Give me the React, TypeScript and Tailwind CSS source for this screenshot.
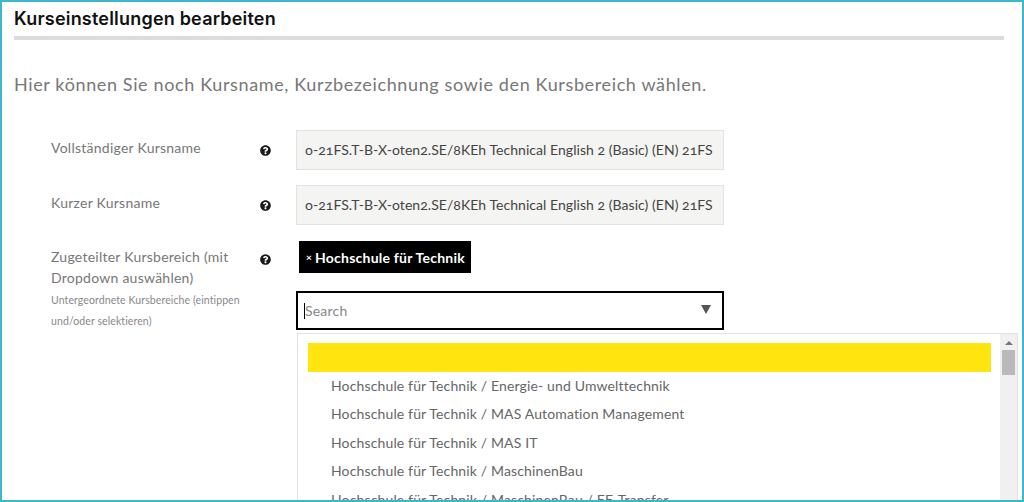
import { FaQuestionCircle } from 'react-icons/fa';

const items = [
  'Hochschule für Technik / Energie- und Umwelttechnik',
  'Hochschule für Technik / MAS Automation Management',
  'Hochschule für Technik / MAS IT',
  'Hochschule für Technik / MaschinenBau',
  'Hochschule für Technik / MaschinenBau / EE-Transfer',
];

const courseName = 'o-21FS.T-B-X-oten2.SE/8KEh Technical English 2 (Basic) (EN) 21FS';

function Help() {
  return <FaQuestionCircle className="w-[11px] h-[11px] text-[#1a1a1a]" />;
}

function ReadonlyField({ value }: { value: string }) {
  return (
    <input
      readOnly
      value={value}
      className="block w-[428px] h-[40px] pl-[8px] pr-0 pb-[2px] bg-[#f4f4f2] border border-[#e2e2e0] text-[14px] text-[#444] oldstyle-nums tracking-[0.05px] outline-none"
    />
  );
}

export default function App() {
  return (
    <div className="h-[502px] overflow-hidden bg-white border-2 border-[#3db7cb] font-['Lato',sans-serif]">
      <div className="pl-[12px] pr-[18px] pt-[6px]">
        <h2 className="h-[28px] font-['Inter',sans-serif] text-[18px] leading-[22px] font-semibold text-[#111] tracking-[0.2px]">
          Kurseinstellungen bearbeiten
        </h2>
        <div className="h-[4px] bg-[#dcdcdc]" />
        <p className="mt-[32px] text-[18px] leading-[24px] text-[#777] tracking-[0.63px]">
          Hier können Sie noch Kursname, Kurzbezeichnung sowie den Kursbereich wählen.
        </p>
      </div>

      <div className="mt-[34px] pl-[49px] flex flex-col">
        <div className="flex items-center h-[40px]">
          <div className="w-[193px] h-[40px] pt-[8px] text-[14px] leading-[20px] text-[#777] tracking-[0.25px]">Vollständiger Kursname</div>
          <div className="w-[52px] pl-[16px]"><Help /></div>
          <ReadonlyField value={courseName} />
        </div>

        <div className="flex items-center h-[40px] mt-[15px]">
          <div className="w-[193px] h-[40px] pt-[8px] text-[14px] leading-[20px] text-[#777] tracking-[0.25px]">Kurzer Kursname</div>
          <div className="w-[52px] pl-[16px]"><Help /></div>
          <ReadonlyField value={courseName} />
        </div>

        <div className="flex mt-[16px]">
          <div className="w-[193px] pt-[5px]">
            <div className="text-[14px] leading-[21px] text-[#777] tracking-[0.25px]">
              Zugeteilter Kursbereich (mit Dropdown auswählen)
            </div>
            <div className="mt-[2px] text-[10.5px] leading-[21px] text-[#888] tracking-[0.1px]">
              Untergeordnete Kursbereiche (eintippen und/oder selektieren)
            </div>
          </div>
          <div className="w-[52px] pl-[16px] pt-[13px]"><Help /></div>

          <div className="flex-1 min-w-0">
            <div className="ml-[3px] w-[172px] h-[32px] bg-black text-white flex items-center pl-[7px] text-[14px] font-bold tracking-[0.23px]">
              <span className="w-[9px] text-[10px] leading-none">×</span>
              <span>Hochschule für Technik</span>
            </div>

            <div className="mt-[18px] w-[428px] h-[39px] border-2 border-black flex items-center pl-[6px] pr-[11px]">
              <span className="w-px h-[16px] bg-black" />
              <span className="text-[14px] text-[#888] tracking-[0.2px]">Search</span>
              <span className="ml-auto mb-[3px] w-0 h-0 border-x-[5.5px] border-x-transparent border-t-[9px] border-t-[#555]" />
            </div>

            <div className="mt-[3px] ml-[1px] mr-[4px] h-[170px] border border-[#e2e2e2] flex overflow-hidden">
              <div className="flex-1 min-w-0 pl-[10px] pr-[9px] pt-[9px]">
                <div className="h-[29px] bg-[#ffe40f]" />
                <ul className="-mt-[0.6px]">
                  {items.map((t) => (
                    <li key={t} className="h-[28.4px] pl-[23px] flex items-center text-[14px] text-[#666] tracking-[0.14px]">{t}</li>
                  ))}
                </ul>
              </div>
              <div className="w-[17px] bg-[#f0f0f0] flex flex-col items-center">
                <span className="mt-[7px] w-0 h-0 border-x-[4px] border-x-transparent border-b-[4px] border-b-[#777]" />
                <span className="mt-[5px] w-[13px] h-[25px] bg-[#b9b9b9]" />
              </div>
            </div>
          </div>
        </div>
      </div>
    </div>
  );
}
